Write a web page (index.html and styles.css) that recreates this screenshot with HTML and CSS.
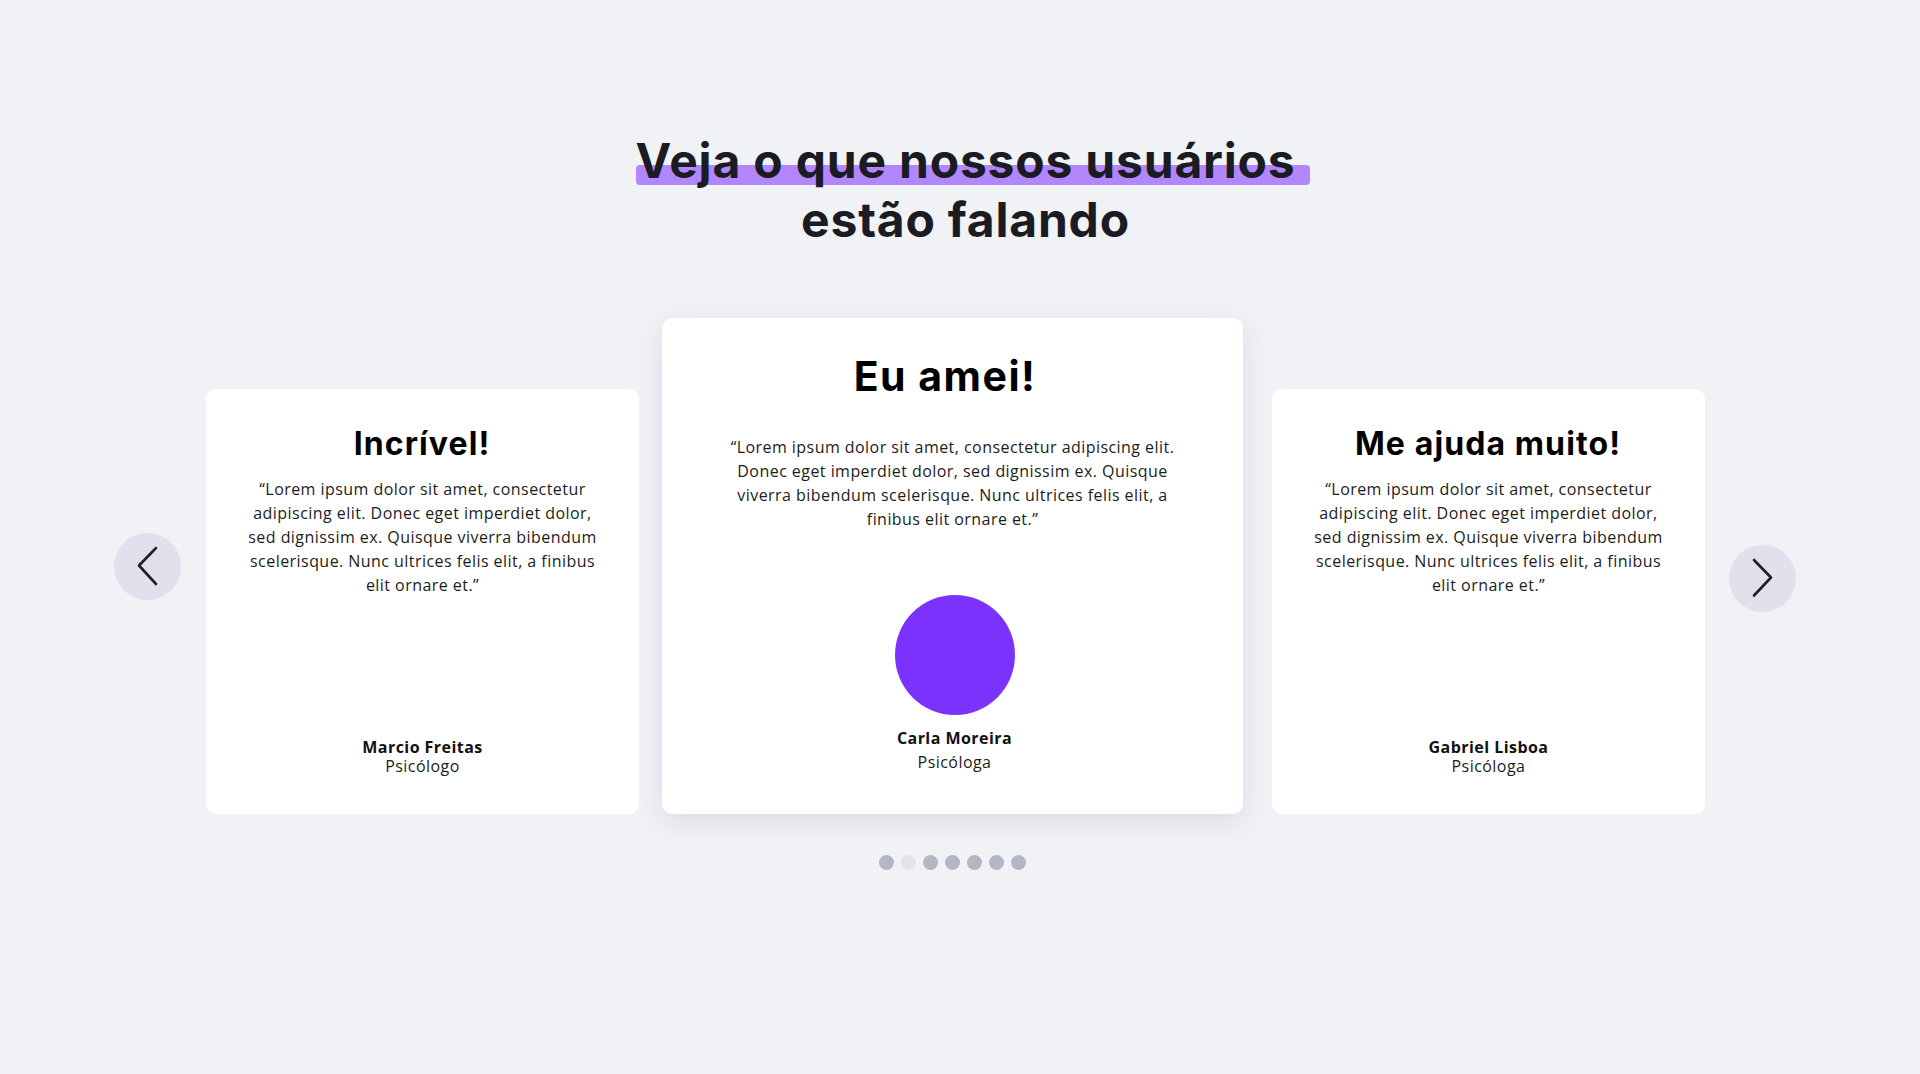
FILE: index.html
```html
<!DOCTYPE html>
<html lang="pt-BR">
<head>
<meta charset="utf-8">
<title>Depoimentos</title>
<link rel="stylesheet" href="styles.css">
</head>
<body>
<section class="testimonials">
  <h2 class="headline">
    <span class="headline-mark">Veja o que nossos usuários</span>
    <span class="headline-rest">estão falando</span>
  </h2>

  <div class="carousel">
    <div class="carousel-row">
      <button class="nav nav-prev" aria-label="Anterior">
        <svg width="67" height="67" viewBox="0 0 67 67"><polyline points="42,15 25,32.5 42,51" fill="none" stroke="#1e1e28" stroke-width="2.6" stroke-linecap="round" stroke-linejoin="round"/></svg>
      </button>

      <div class="track">
        <article class="card">
          <h3 class="card-title">Incrível!</h3>
          <p class="card-text">“Lorem ipsum dolor sit amet, consectetur adipiscing elit. Donec eget imperdiet dolor, sed dignissim ex. Quisque viverra bibendum scelerisque. Nunc ultrices felis elit, a finibus elit ornare et.”</p>
          <div class="author">
            <strong class="author-name">Marcio Freitas</strong>
            <span class="author-role">Psicólogo</span>
          </div>
        </article>

        <article class="card card-featured">
          <h3 class="card-title">Eu amei!</h3>
          <p class="card-text">“Lorem ipsum dolor sit amet, consectetur adipiscing elit. Donec eget imperdiet dolor, sed dignissim ex. Quisque viverra bibendum scelerisque. Nunc ultrices felis elit, a finibus elit ornare et.”</p>
          <div class="author">
            <div class="avatar"></div>
            <strong class="author-name">Carla Moreira</strong>
            <span class="author-role">Psicóloga</span>
          </div>
        </article>

        <article class="card">
          <h3 class="card-title">Me ajuda muito!</h3>
          <p class="card-text">“Lorem ipsum dolor sit amet, consectetur adipiscing elit. Donec eget imperdiet dolor, sed dignissim ex. Quisque viverra bibendum scelerisque. Nunc ultrices felis elit, a finibus elit ornare et.”</p>
          <div class="author">
            <strong class="author-name">Gabriel Lisboa</strong>
            <span class="author-role">Psicóloga</span>
          </div>
        </article>
      </div>

      <button class="nav nav-next" aria-label="Próximo">
        <svg width="67" height="67" viewBox="0 0 67 67"><polyline points="25,15 42,32.5 25,50.5" fill="none" stroke="#1e1e28" stroke-width="2.6" stroke-linecap="round" stroke-linejoin="round"/></svg>
      </button>
    </div>

    <div class="dots">
      <span class="dot"></span>
      <span class="dot dot-active"></span>
      <span class="dot"></span>
      <span class="dot"></span>
      <span class="dot"></span>
      <span class="dot"></span>
      <span class="dot"></span>
    </div>
  </div>
</section>
</body>
</html>
```

FILE: styles.css
```css
* { box-sizing: border-box; }

html, body {
  margin: 0;
  padding: 0;
}

body {
  background: #f1f2f6;
  font-family: "Open Sans", "Noto Sans", sans-serif;
  color: #1c1c1c;
  min-height: 1074px;
}

.testimonials {
  padding-top: 131px;
}

.headline {
  margin: 0;
  padding-left: 11px;
  text-align: center;
  font-family: Inter, "Liberation Sans", sans-serif;
  font-weight: 700;
  font-size: 48px;
  line-height: 59px;
  letter-spacing: 0.8px;
  color: #1b1b23;
}

.headline-mark {
  position: relative;
  display: inline-block;
  isolation: isolate;
}

.headline-mark::before {
  content: "";
  position: absolute;
  left: 0;
  right: -15px;
  top: 34px;
  height: 20px;
  border-radius: 4px;
  background: #b287fd;
  z-index: -1;
}

.headline-rest {
  display: block;
}

.carousel {
  width: 1682px;
  margin: 69px 0 0 114px;
}

.carousel-row {
  display: flex;
  align-items: center;
}

.nav {
  flex: 0 0 67px;
  width: 67px;
  height: 67px;
  padding: 0;
  border: 0;
  border-radius: 50%;
  background: #e0e1ed;
  display: flex;
  align-items: center;
  justify-content: center;
  cursor: pointer;
}

.nav svg { display: block; }

.nav-next {
  margin-top: 25px;
}

.track {
  display: flex;
  align-items: flex-end;
  gap: 23px;
  margin: 0 24px 0 25px;
}

.card {
  width: 433px;
  height: 425px;
  background: #ffffff;
  border-radius: 10px;
  padding: 36px 38px 38px;
  display: flex;
  flex-direction: column;
  align-items: center;
  text-align: center;
}

.card-title {
  margin: 0;
  padding-right: 1px;
  font-family: Inter, "Liberation Sans", sans-serif;
  font-weight: 700;
  font-size: 32px;
  line-height: 1.2;
  letter-spacing: 1.1px;
  color: #000;
}

.card-text {
  margin: 14px 0 0;
  font-size: 16px;
  line-height: 24px;
  letter-spacing: 0.45px;
  color: #1c1c1c;
}

.author {
  margin-top: auto;
  display: flex;
  flex-direction: column;
  align-items: center;
  font-size: 16px;
  line-height: 19.2px;
  letter-spacing: 0.45px;
}

.author-name {
  font-weight: 700;
  color: #111;
}

.author-role {
  color: #1c1c1c;
}

.card-featured {
  width: 581px;
  height: 496px;
  margin-right: 6px;
  padding: 34px 60px 40px;
  box-shadow: 0 8px 28px rgba(30, 30, 60, 0.10);
}

.card-featured .card-title {
  padding-right: 15px;
  font-size: 41px;
  letter-spacing: 1.5px;
}

.card-featured .card-text {
  margin-top: 34px;
}

.card-featured .author {
  padding-left: 4px;
  line-height: 24px;
}

.avatar {
  width: 120px;
  height: 120px;
  border-radius: 50%;
  background: #7a32fc;
  margin-bottom: 11px;
}

.dots {
  display: flex;
  justify-content: center;
  gap: 7px;
  margin-top: 41px;
  padding-right: 5px;
}

.dot {
  width: 15px;
  height: 15px;
  border-radius: 50%;
  background: #b5b6c4;
}

.dot-active {
  background: #e1e2ee;
}
```
